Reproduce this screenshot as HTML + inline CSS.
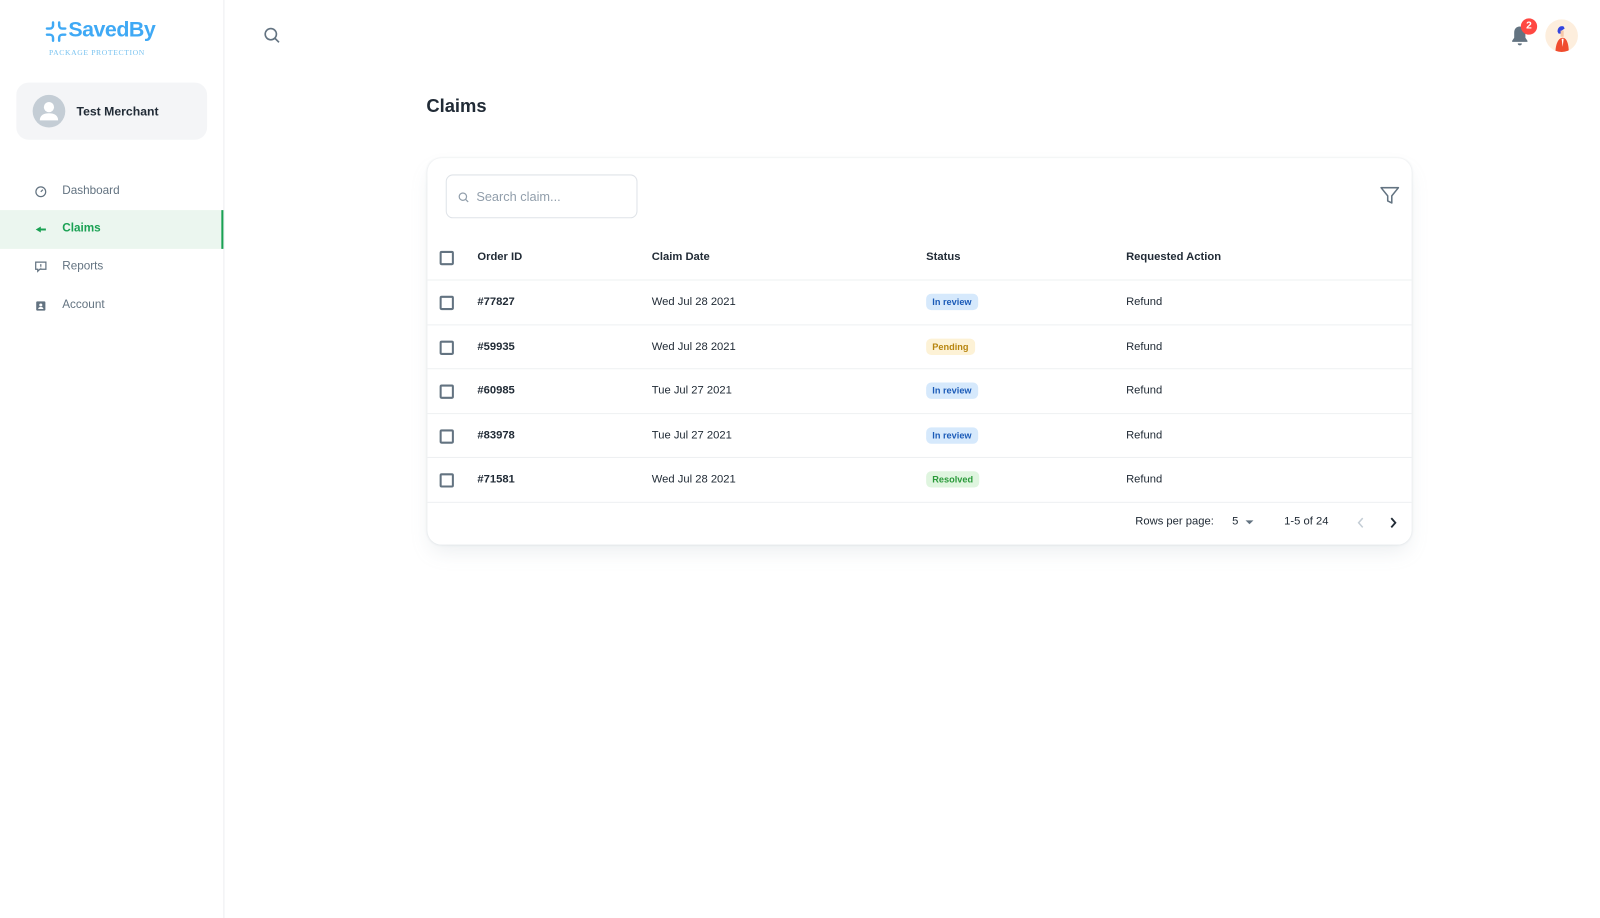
<!DOCTYPE html>
<html><head><style>
*{box-sizing:border-box;margin:0;padding:0}
body{width:1600px;height:900px;background:#fff;font-family:"Liberation Sans",sans-serif;color:#212b36;position:relative;overflow:hidden}
#w{position:absolute;left:0;top:0;width:1569px;height:883px;transform:scale(1.02);transform-origin:0 0}
.side{position:absolute;left:0;top:0;width:220px;height:900px;border-right:1px solid #eceef0}
.logo{position:absolute;left:44px;top:18px}
.logo .t{position:absolute;left:23px;top:0;font-size:21px;font-weight:bold;color:#3fa9f5;letter-spacing:-0.5px}
.logo .s{position:absolute;left:4px;top:29px;font-size:7.5px;color:#7cc4f0;letter-spacing:0.6px;white-space:nowrap;font-family:"Liberation Serif",serif}
.acct{position:absolute;left:16px;top:81px;width:187px;height:56px;background:#f4f5f7;border-radius:12px}
.av{position:absolute;left:16px;top:12px;width:32px;height:32px;border-radius:50%;background:#c4cdd5;overflow:hidden}
.acct .n{position:absolute;left:59px;top:21px;font-size:12px;font-weight:bold;color:#212b36}
.nav{position:absolute;left:0;width:219px;height:38px;font-size:11.5px;color:#637381}
.nav span{position:absolute;left:61px;top:12px}
.nav svg{position:absolute;left:34px;top:13px}
.nav.on{background:#ebf6ef;color:#1aa153;border-right:2px solid #1aa153;font-weight:bold}
.card{position:absolute;left:419px;top:155px;width:965px;height:379px;border-radius:14px;box-shadow:0 0 2px rgba(145,158,171,.25),0 10px 20px -4px rgba(145,158,171,.18);background:#fff}
.search{position:absolute;left:18px;top:16px;width:188px;height:43px;border:1px solid #dfe3e8;border-radius:7px}
.search span{position:absolute;left:29px;top:14px;font-size:12.5px;color:#919eab}
.row{position:absolute;left:0;width:965px;height:44px;border-bottom:1px solid #eef0f2;font-size:11px;color:#212b36}
.row div{position:absolute;top:15px}
.cb{position:absolute;left:12px!important;top:15px!important;width:14px;height:14px;border:2px solid #637381;border-radius:2px}
.c1{left:49px}.c2{left:220px}.c3{left:489px}.c4{left:685px}
.b{font-weight:bold}
.pill{font-size:9px;font-weight:bold;padding:3px 6px;border-radius:5px;margin-top:-2px}
.rev{background:#d6e9fc;color:#1b5bb8}.pen{background:#fdf2d6;color:#b7850f}.res{background:#dff5df;color:#2a9a3a}
.foot{position:absolute;top:350px;font-size:11px;color:#212b36}
</style></head><body><div id="w">
<div class="side">
 <div class="logo">
  <svg width="22" height="22" viewBox="0 0 22 22" style="position:absolute;left:0;top:2px" fill="none" stroke="#3fa9f5" stroke-width="2.4" stroke-linecap="round"><path d="M8 2v3a3 3 0 0 1-3 3H2M14 2v3a3 3 0 0 0 3 3h3M8 20v-3a3 3 0 0 0-3-3H2M14 20v-3a3 3 0 0 1 3-3h3"/></svg>
  <div class="t">SavedBy</div>
  <div class="s">PACKAGE PROTECTION</div>
 </div>
 <div class="acct"><div class="av"><svg width="32" height="32" viewBox="0 0 32 32"><circle cx="16" cy="12" r="5" fill="#fff"/><path d="M7 25c0-5 4-7 9-7s9 2 9 7z" fill="#fff"/></svg></div><div class="n">Test Merchant</div></div>
 <div class="nav" style="top:169px"><svg width="12" height="12" viewBox="0 0 12 12" fill="none" stroke="#637381" stroke-width="1.2"><circle cx="6" cy="6" r="4.8"/><path d="M6 6l2-2"/></svg><span>Dashboard</span></div>
 <div class="nav on" style="top:206px"><svg width="12" height="12" viewBox="0 0 12 12" fill="#1aa153"><path d="M1 6l5-3v2h5v2H6v2z"/></svg><span>Claims</span></div>
 <div class="nav" style="top:243px"><svg width="12" height="12" viewBox="0 0 12 12" fill="none" stroke="#637381" stroke-width="1.2"><path d="M1 1h10v7H5l-2 2V8H1z"/><path d="M6 3v2.5M6 6.5v.6"/></svg><span>Reports</span></div>
 <div class="nav" style="top:281px"><svg width="12" height="12" viewBox="0 0 12 12"><rect x="1.5" y="1.5" width="9" height="9" rx="1" fill="#637381"/><circle cx="6" cy="5" r="1.5" fill="#fff"/><path d="M3.5 9c0-1.5 1-2 2.5-2s2.5.5 2.5 2z" fill="#fff"/></svg><span>Account</span></div>
</div>
<svg style="position:absolute;left:258px;top:26px" width="17" height="17" viewBox="0 0 17 17" fill="none" stroke="#637381" stroke-width="1.6"><circle cx="7.5" cy="7.5" r="5.5"/><path d="M11.5 11.5l4 4"/></svg>
<svg style="position:absolute;left:1480px;top:24px" width="20" height="22" viewBox="0 0 20 22" fill="#637381"><path d="M10 2c-3.5 0-5.5 2.5-5.5 6v5L2.5 16v1h15v-1l-2-3V8c0-3.5-2-6-5.5-6z"/><path d="M8 18.5h4a2 2 0 0 1-4 0z"/></svg>
<div style="position:absolute;left:1491px;top:18px;width:16px;height:16px;border-radius:50%;background:#ff4842;color:#fff;font-size:10px;font-weight:bold;text-align:center;line-height:16px">2</div>
<div style="position:absolute;left:1515px;top:19px;width:32px;height:32px;border-radius:50%;background:#fdeedd;overflow:hidden"><svg width="32" height="32" viewBox="0 0 32 32"><path d="M12 12c0-5 4-6 6-5l1 2-3 2v3h-3z" fill="#3345e0"/><rect x="15" y="11" width="3" height="6" fill="#f6c7a8"/><path d="M10 32c0-8 3-14 7-14s6 6 6 14z" fill="#f04c2e"/><path d="M16 19l1 8 1-8z" fill="#fff"/></svg></div>
<div style="position:absolute;left:418px;top:94px;font-size:18px;font-weight:bold;color:#212b36">Claims</div>
<div class="card">
 <div class="search"><svg style="position:absolute;left:11px;top:16px" width="11" height="11" viewBox="0 0 11 11" fill="none" stroke="#919eab" stroke-width="1.2"><circle cx="4.8" cy="4.8" r="3.6"/><path d="M7.5 7.5l2.5 2.5"/></svg><span>Search claim...</span></div>
 <svg style="position:absolute;left:934px;top:28px" width="19" height="18" viewBox="0 0 19 18" fill="none" stroke="#637381" stroke-width="1.5" stroke-linejoin="round"><path d="M1 1h17l-6.5 8v7l-4-2V9z"/></svg>
 <div class="row" style="top:76px;height:44px"><div class="cb"></div><div class="c1 b">Order ID</div><div class="c2 b">Claim Date</div><div class="c3 b">Status</div><div class="c4 b">Requested Action</div></div>
 <div class="row" style="top:120px"><div class="cb"></div><div class="c1 b">#77827</div><div class="c2">Wed Jul 28 2021</div><div class="c3 pill rev">In review</div><div class="c4">Refund</div></div>
 <div class="row" style="top:164px;height:43px"><div class="cb"></div><div class="c1 b">#59935</div><div class="c2">Wed Jul 28 2021</div><div class="c3 pill pen">Pending</div><div class="c4">Refund</div></div>
 <div class="row" style="top:207px;height:44px"><div class="cb"></div><div class="c1 b">#60985</div><div class="c2">Tue Jul 27 2021</div><div class="c3 pill rev">In review</div><div class="c4">Refund</div></div>
 <div class="row" style="top:251px;height:43px"><div class="cb"></div><div class="c1 b">#83978</div><div class="c2">Tue Jul 27 2021</div><div class="c3 pill rev">In review</div><div class="c4">Refund</div></div>
 <div class="row" style="top:294px;height:44px"><div class="cb"></div><div class="c1 b">#71581</div><div class="c2">Wed Jul 28 2021</div><div class="c3 pill res">Resolved</div><div class="c4">Refund</div></div>
 <div class="foot" style="left:694px">Rows per page:</div>
 <div class="foot" style="left:789px">5</div>
 <svg style="position:absolute;left:802px;top:355px" width="8" height="5" viewBox="0 0 8 5" fill="#637381"><path d="M0 0h8L4 4z"/></svg>
 <div class="foot" style="left:840px">1-5 of 24</div>
 <svg style="position:absolute;left:911px;top:352px" width="8" height="11" viewBox="0 0 8 11" fill="none" stroke="#c4cdd5" stroke-width="1.5"><path d="M6 1L2 5.5 6 10"/></svg>
 <svg style="position:absolute;left:943px;top:352px" width="8" height="11" viewBox="0 0 8 11" fill="none" stroke="#212b36" stroke-width="1.8"><path d="M2 1l4 4.5L2 10"/></svg>
</div>
</div></body></html>
